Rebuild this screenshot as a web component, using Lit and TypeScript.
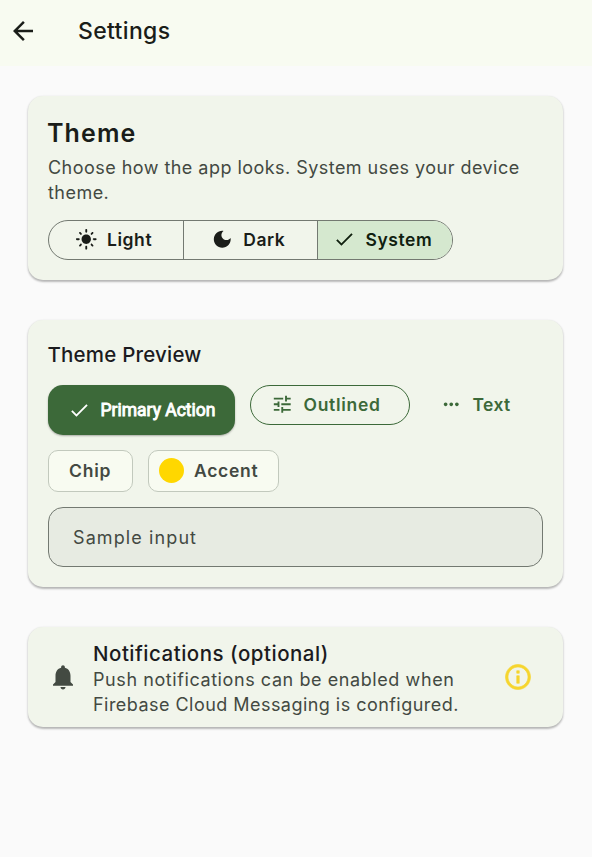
import { LitElement, html, css, svg } from "lit";
import { customElement } from "lit/decorators.js";

const paths: Record<string, string> = {
  back: "M20 11H7.83l5.59-5.59L12 4l-8 8 8 8 1.41-1.41L7.83 13H20v-2z",
  light:
    "M12 7c-2.76 0-5 2.24-5 5s2.24 5 5 5 5-2.24 5-5-2.24-5-5-5zM2 13h2c.55 0 1-.45 1-1s-.45-1-1-1H2c-.55 0-1 .45-1 1s.45 1 1 1zm18 0h2c.55 0 1-.45 1-1s-.45-1-1-1h-2c-.55 0-1 .45-1 1s.45 1 1 1zM11 2v2c0 .55.45 1 1 1s1-.45 1-1V2c0-.55-.45-1-1-1s-1 .45-1 1zm0 18v2c0 .55.45 1 1 1s1-.45 1-1v-2c0-.55-.45-1-1-1s-1 .45-1 1zM5.99 4.58c-.39-.39-1.03-.39-1.41 0-.39.39-.39 1.03 0 1.41l1.06 1.06c.39.39 1.03.39 1.41 0s.39-1.03 0-1.41L5.99 4.58zm12.37 12.37c-.39-.39-1.03-.39-1.41 0-.39.39-.39 1.03 0 1.41l1.06 1.06c.39.39 1.03.39 1.41 0 .39-.39.39-1.03 0-1.41l-1.06-1.06zm1.06-10.96c.39-.39.39-1.03 0-1.41-.39-.39-1.03-.39-1.41 0l-1.06 1.06c-.39.39-.39 1.03 0 1.41s1.03.39 1.41 0l1.06-1.06zM7.05 18.36c.39-.39.39-1.03 0-1.41-.39-.39-1.03-.39-1.41 0l-1.06 1.06c-.39.39-.39 1.03 0 1.41s1.03.39 1.41 0l1.06-1.06z",
  dark: "M12 3c-4.97 0-9 4.03-9 9s4.03 9 9 9 9-4.03 9-9c0-.46-.04-.92-.1-1.36-.98 1.37-2.58 2.26-4.4 2.26-2.98 0-5.4-2.42-5.4-5.4 0-1.81.89-3.42 2.26-4.4-.44-.06-.9-.1-1.36-.1z",
  check: "M9 16.17L4.83 12l-1.42 1.41L9 19 21 7l-1.41-1.41z",
  tune: "M3 17v2h6v-2H3zM3 5v2h10V5H3zm10 16v-2h8v-2h-8v-2h-2v6h2zM7 9v2H3v2h4v2h2V9H7zm14 4v-2H11v2h10zm-6-4h2V7h4V5h-4V3h-2v6z",
  more: "M6 10c-1.1 0-2 .9-2 2s.9 2 2 2 2-.9 2-2-.9-2-2-2zm12 0c-1.1 0-2 .9-2 2s.9 2 2 2 2-.9 2-2-.9-2-2-2zm-6 0c-1.1 0-2 .9-2 2s.9 2 2 2 2-.9 2-2-.9-2-2-2z",
  bell: "M12 22c1.1 0 2-.9 2-2h-4c0 1.1.89 2 2 2zm6-6v-5c0-3.07-1.64-5.64-4.5-6.32V4c0-.83-.67-1.5-1.5-1.5s-1.5.67-1.5 1.5v.68C7.63 5.36 6 7.92 6 11v5l-2 2v1h16v-1l-2-2z",
  info: "M11 7h2v2h-2zm0 4h2v6h-2zm1-9C6.48 2 2 6.48 2 12s4.48 10 10 10 10-4.48 10-10S17.52 2 12 2zm0 18c-4.41 0-8-3.59-8-8s3.59-8 8-8 8 3.59 8 8-3.59 8-8 8z",
};

const icon = (name: string, large = false) => html`
  <svg class=${large ? "icon large" : "icon"} viewBox="0 0 24 24" aria-hidden="true">
    ${svg`<path d=${paths[name]}></path>`}
  </svg>
`;

@customElement("app-root")
export class AppRoot extends LitElement {
  static styles = css`
    :host {
      display: block;
      min-height: 100vh;
      background: #fafafa;
      color: #1a1d19;
      font-family: Inter, "Noto Sans", sans-serif;
      font-size: 17.5px;
    }
    * { box-sizing: border-box; }
    .icon { width: 22.5px; height: 22.5px; fill: currentColor; flex: none; display: block; }
    .large { width: 30px; height: 30px; }
    header {
      display: flex;
      align-items: center;
      height: 66px;
      padding: 0 0 4px 8px;
      background: #f8fbf1;
    }
    h1, h2, h3, p { margin: 0; white-space: nowrap; }
    h1 { margin-left: 40px; font-size: 23px; font-weight: 550; line-height: 30px; letter-spacing: 0.35px; }
    main { display: flex; flex-direction: column; gap: 40px; padding: 30px 29px 0 28px; }
    .card {
      background: #f1f5eb;
      border-radius: 15px;
      padding: 0 20px;
      box-shadow: 0 1.5px 2px rgba(0, 0, 0, 0.22), 0 1px 3px rgba(0, 0, 0, 0.1);
    }
    .theme { height: 183.5px; padding-top: 20px; }
    .theme h2 { font-size: 25px; font-weight: 600; line-height: 34px; letter-spacing: 1.1px; margin-left: -1px; }
    .body { color: #434942; line-height: 25px; letter-spacing: 0.46px; font-size: 18px; }
    .theme .body { margin-top: 5px; }
    .segments {
      display: flex;
      width: 405px;
      height: 40px;
      margin-top: 15px;
      border: 1.25px solid #737971;
      border-radius: 20px;
      overflow: hidden;
      font-weight: 600;
      letter-spacing: 0.55px;
    }
    .segment {
      flex: 1;
      display: flex;
      align-items: center;
      justify-content: center;
      gap: 10px;
      padding: 0 5px 1px 0;
    }
    .segment + .segment { border-left: 1.25px solid #737971; }
    .selected { background: #d5e8cf; color: #10200f; }
    .preview { height: 267.5px; padding-top: 20.5px; }
    h3 { font-size: 20.5px; font-weight: 500; line-height: 30px; letter-spacing: 0.2px; color: #1b1b1e; }
    .preview h3 { margin-left: -0.5px; }
    .buttons { display: flex; gap: 15px; margin-top: 15px; align-items: flex-start; }
    .button {
      display: flex;
      align-items: center;
      gap: 10px;
      height: 40px;
      color: #3c6939;
      font-weight: 600;
      letter-spacing: 0.7px;
    }
    .primary {
      width: 187px;
      height: 50px;
      padding-left: 20px;
      border-radius: 15px;
      background: #3c6939;
      color: #fff;
      font-family: Roboto, sans-serif;
      font-weight: 400;
      letter-spacing: 0;
      box-shadow: 0 1px 2px rgba(0, 0, 0, 0.3);
    }
    .primary span { -webkit-text-stroke: 0.9px currentColor; }
    .outlined { width: 160px; padding: 0 0 1px 20px; border: 1.25px solid #3c6939; border-radius: 20px; }
    .text { padding: 0 0 1px 15px; letter-spacing: 0.4px; }
    .chips { display: flex; gap: 15px; margin-top: 15px; }
    .chip {
      display: flex;
      align-items: center;
      height: 42px;
      border: 1.25px solid #c2c9bd;
      border-radius: 10px;
      background: #f8fbf1;
      color: #434942;
      font-weight: 600;
      letter-spacing: 0.8px;
      padding: 0 20px 1px;
      width: 85px;
    }
    .accent { width: 131px; padding: 0 0 1px 10px; gap: 10px; letter-spacing: 0.7px; }
    .dot { width: 25px; height: 25px; border-radius: 50%; background: #ffd700; }
    .field {
      display: flex;
      align-items: center;
      height: 60px;
      margin-top: 15px;
      padding: 0 24px;
      border: 1.25px solid #737971;
      border-radius: 15px;
      background: #e7ebe2;
      color: #434942;
      font-size: 18px;
      letter-spacing: 1.1px;
    }
    .notice { height: 99.5px; display: flex; align-items: center; color: #434a42; }
    .copy { flex: 1; margin-left: 15px; padding-top: 4px; }
    .copy h3 { line-height: 27px; letter-spacing: 0.5px; }
    .push { letter-spacing: 0.58px; }
    .info { color: #f6d52e; margin-right: 10px; }
    .info .icon { stroke: currentColor; stroke-width: 0.5px; }
  `;

  render() {
    return html`
      <header>
        ${icon("back", true)}
        <h1>Settings</h1>
      </header>
      <main>
        <section class="card theme">
          <h2>Theme</h2>
          <p class="body">Choose how the app looks. System uses your device<br />theme.</p>
          <div class="segments">
            <div class="segment">${icon("light")}<span>Light</span></div>
            <div class="segment">${icon("dark")}<span>Dark</span></div>
            <div class="segment selected">${icon("check")}<span>System</span></div>
          </div>
        </section>
        <section class="card preview">
          <h3>Theme Preview</h3>
          <div class="buttons">
            <div class="button primary">${icon("check")}<span>Primary Action</span></div>
            <div class="button outlined">${icon("tune")}<span>Outlined</span></div>
            <div class="button text">${icon("more")}<span>Text</span></div>
          </div>
          <div class="chips">
            <div class="chip">Chip</div>
            <div class="chip accent"><i class="dot"></i><span>Accent</span></div>
          </div>
          <div class="field">Sample input</div>
        </section>
        <section class="card notice">
          ${icon("bell", true)}
          <div class="copy">
            <h3>Notifications (optional)</h3>
            <p class="body">
              <span class="push">Push notifications can be enabled when</span><br />Firebase Cloud Messaging is configured.
            </p>
          </div>
          <div class="info">${icon("info", true)}</div>
        </section>
      </main>
    `;
  }
}
